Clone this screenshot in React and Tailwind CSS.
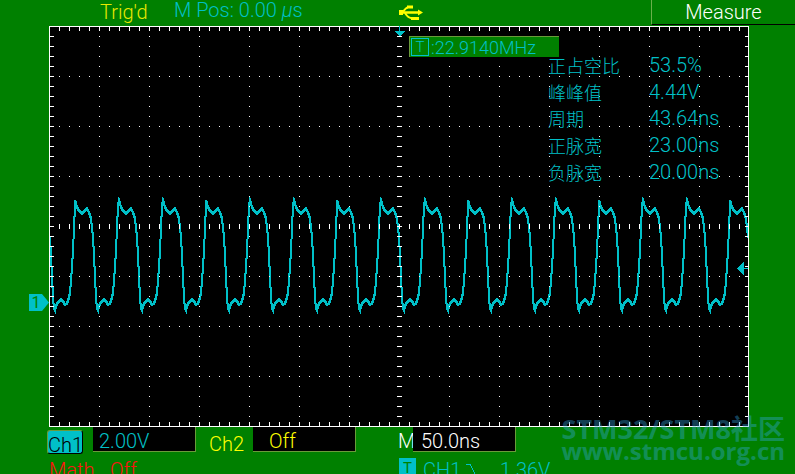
import React from 'react';

const TEAL = '#00c0c8';

// One signal period as [x offset from the peak, y].
const CYCLE = [
  [0, 174], [1, 177], [2, 181], [4, 184], [7, 187], [9, 185], [12, 182], [14, 186],
  [16, 192], [18, 211], [19, 228], [20, 251], [21, 271], [22, 282], [23, 284],
  [24, 279], [26, 276], [29, 273], [31, 275], [33, 278], [35, 277], [37, 271], [38, 266],
  [39, 254], [40, 241], [41, 224], [42, 202], [43, 179],
];

function buildTrace() {
  const pts = [];
  for (let n = -1; n < 16; n += 1) {
    const peak = Math.round(26.4 + n * 43.66);
    CYCLE.forEach(([dx, y]) => {
      const x = peak + dx;
      if (x >= 1 && x <= 699) pts.push(`${x},${y}`);
    });
  }
  return pts.join(' ');
}

function buildGrid() {
  let d = '';
  for (let x = 10; x < 699; x += 10) {
    d += `M${x} 1h1v4h-1zM${x} 396h1v4h-1zM${x} 198h1v5h-1z`;
    for (let y = 50; y < 400; y += 50) if (y !== 200) d += `M${x} ${y}h1v1h-1z`;
  }
  for (let y = 10; y < 400; y += 10) {
    d += `M1 ${y}h4v1h-4zM696 ${y}h3v1h-3zM348 ${y}h5v1h-5z`;
    for (let x = 50; x < 699; x += 50) if (y % 50 !== 0) d += `M${x} ${y}h1v1h-1z`;
  }
  return d;
}

const GRID = buildGrid();
const TRACE = buildTrace();

const MEASURES = [
  ['正占空比', '53.5%'],
  ['峰峰值', '4.44V'],
  ['周期', '43.64ns'],
  ['正脉宽', '23.00ns'],
  ['负脉宽', '20.00ns'],
];

function UsbIcon() {
  return (
    <svg className="block h-4 w-6" viewBox="0 0 24 16" fill="none" stroke="#ffff00" strokeWidth="2" aria-label="USB">
      <path d="M0 5h4v5H0zM19 4.500l5 3-5 3z" fill="#ffff00" stroke="none" />
      <path d="M2 7.500H21" strokeWidth="2.500" />
      <path d="M4 7C6 4 7 2.500 9 2.500M6 8C8 11 9 13 12 13" />
      <path d="M8 2h6M12 13.500h8" strokeWidth="3" />
    </svg>
  );
}

function Graticule() {
  return (
    <svg className="block h-auto w-full" viewBox="0 0 700 401" shapeRendering="crispEdges">
      <rect width="700" height="401" fill="#000" />
      <polyline points={TRACE} fill="none" stroke={TEAL} strokeWidth="2" />
      <polyline points={TRACE} fill="none" stroke={TEAL} strokeWidth="2" transform="translate(0 1)" />
      <path d={GRID} fill="#fff" />
      <path d="M0 0H700V401H0zM1 1V400H699V1z" fill="#fff" fillRule="evenodd" />
      <path d="M345 5h11l-5 5h-1zM350 0h1v6h-1z" fill={TEAL} />
      <path d="M688 242.500l7-7v14zM695 242h4v1h-4z" fill={TEAL} />
    </svg>
  );
}

function ValueBox({ children, className }) {
  return (
    <div className={`h-[25px] w-[103px] border-r border-b border-[#6a9a3a] bg-black leading-7 ${className}`}>
      {children}
    </div>
  );
}

export default function App() {
  return (
    <div className="relative h-screen overflow-hidden bg-[#008000] font-['Roboto','Noto_Sans_CJK_SC',sans-serif] text-[20px] font-light text-[#00c0c8]">
      <header className="flex h-[26px] items-start whitespace-nowrap leading-6">
        <span className="w-[174px] pl-[100px] text-[#e8e800]">Trig'd</span>
        <span className="w-[225px] leading-5">M Pos: 0.00 <i>μ</i>s</span>
        <div className="flex-1 pt-[5px]"><UsbIcon /></div>
        <button type="button" className="h-[25px] w-36 border-b border-l border-b-black border-l-[#6ab04a] text-center font-light text-white">
          Measure
        </button>
      </header>

      <main className="relative mr-[46px] ml-[49px]">
        <Graticule />
        <div className="absolute top-[10px] left-[360px] flex h-[21px] w-[150px] items-center border-t border-l border-[#6a9a3a] bg-[#008000] leading-5">
          <span className="ml-px flex h-[18px] w-[18px] items-center justify-center border border-[#00c0c8] text-[15px]">T</span>
          <span className="ml-[2px] pt-[2px] text-[18px]">:22.9140MHz</span>
        </div>
        <dl className="absolute top-[26px] left-[499px] grid h-[133px] grid-cols-[101px_80px] items-center whitespace-nowrap">
          {MEASURES.map(([name, value]) => (
            <React.Fragment key={name}>
              <dt className="pt-1 text-[18px] leading-[22px]">{name}</dt>
              <dd className="leading-6">{value}</dd>
            </React.Fragment>
          ))}
        </dl>
        <div className="absolute top-[268px] -left-5 h-[17px] w-5">
          <svg className="absolute inset-0" width="20" height="17" viewBox="0 0 20 17"><path d="M0 0H13L20 8.500L13 17H0z" fill={TEAL} /></svg>
          <span className="relative block w-[14px] text-center text-[16px] leading-[18px] font-normal text-[#008000]">1</span>
        </div>
      </main>

      <footer className="whitespace-nowrap">
        <div className="flex h-[31px] items-start">
          <button type="button" className="mt-[3px] ml-[47px] h-6 w-9 rounded-[3px] border border-t-[#6a9a3a] border-r-black border-b-black border-l-[#6a9a3a] bg-[#00c0c8] text-center leading-7 font-light text-black">
            Ch1
          </button>
          <ValueBox className="ml-[10px] pl-[6px]">2.00V</ValueBox>
          <span className="w-[57px] pt-[3px] pl-[13px] leading-7 text-[#ffff00]">Ch2</span>
          <ValueBox className="pl-4 text-[#ffff00]">Off</ValueBox>
          <span className="w-[57px] pl-[42px] leading-7 text-white">M</span>
          <ValueBox className="pl-2 text-white">50.0ns</ValueBox>
        </div>
        <div className="flex items-start leading-6">
          <span className="w-[110px] pl-[49px] text-[#ff1010]">Math</span>
          <span className="w-[289px] text-[#ff1010]">Off</span>
          <span className="flex h-5 w-[17px] items-center justify-center bg-[#00c0c8] text-[15px] font-normal text-[#008000]">T</span>
          <span className="w-[50px] pl-[7px]">CH1</span>
          <svg className="mt-[6px] h-3 w-[10px]" viewBox="0 0 10 12" fill="none" stroke={TEAL} shapeRendering="crispEdges">
            <path d="M0 .5H4L9 9.500" />
          </svg>
          <span className="pl-6">1.36V</span>
        </div>
      </footer>

      <div className="absolute right-[10px] bottom-3 text-right font-['Open_Sans','Noto_Sans_CJK_SC',sans-serif] leading-[22px] font-bold whitespace-nowrap text-[#34a8e4]/40">
        <p className="text-[27px]">STM32/STM8社区</p>
        <p className="text-[24px]">www.stmcu.org.cn</p>
      </div>
    </div>
  );
}
